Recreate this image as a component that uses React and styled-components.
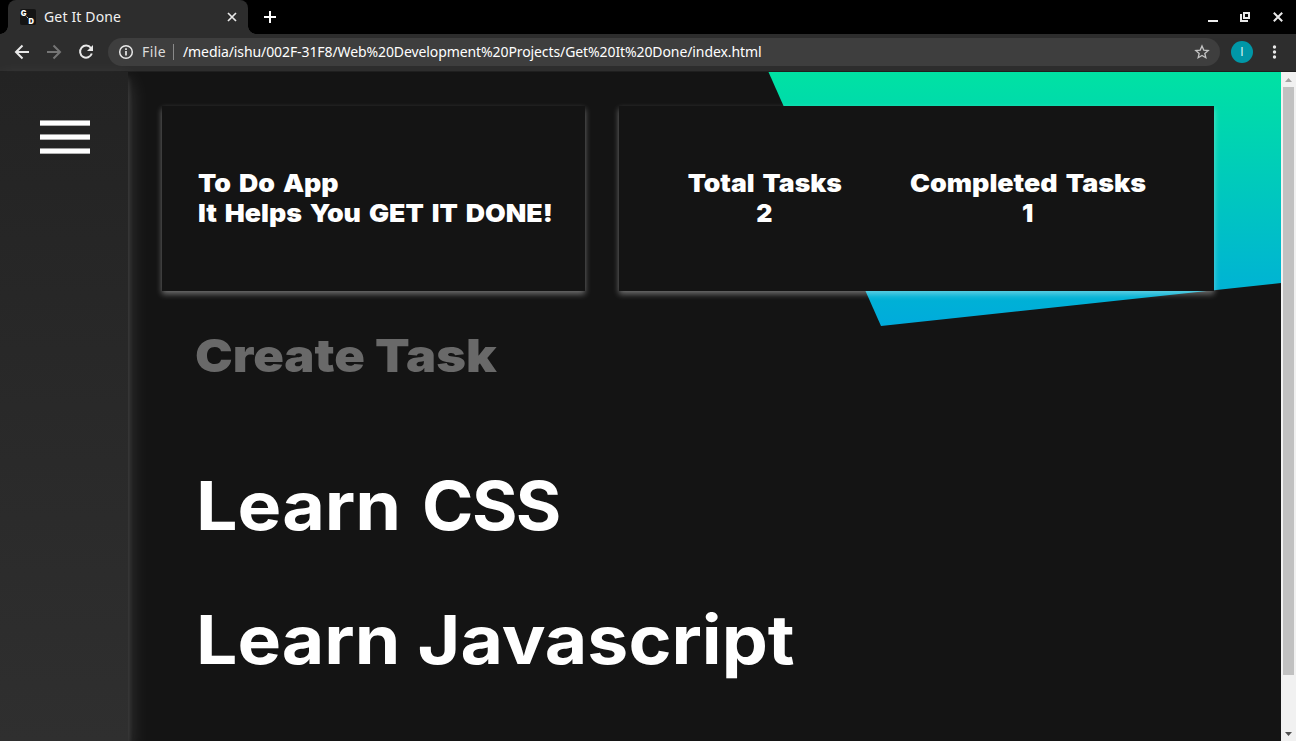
import React from "react";
import styled, { createGlobalStyle } from "styled-components";

const GlobalStyle = createGlobalStyle`
  * { box-sizing: border-box; }
  body {
    margin: 0;
    background: #141414;
    overflow: hidden;
    font-family: Inter, "Liberation Sans", sans-serif;
  }
`;

const Window = styled.div`
  display: flex;
  flex-direction: column;
  width: 1296px;
  height: 741px;
  overflow: hidden;
`;

const TabStrip = styled.header`
  display: flex;
  height: 34px;
  padding-left: 8px;
  background: #000;
  font-family: "Noto Sans", sans-serif;
`;

const Tab = styled.div`
  position: relative;
  display: flex;
  align-items: center;
  width: 240px;
  height: 34px;
  padding: 0 10px 0 12px;
  background: #2d2d2d;
  border-radius: 8px 8px 0 0;
  color: #f1f1f1;
  &::before,
  &::after {
    content: "";
    position: absolute;
    bottom: 0;
    width: 8px;
    height: 8px;
  }
  &::before {
    left: -8px;
    background: radial-gradient(circle at 0 0, transparent 7.5px, #2d2d2d 8px);
  }
  &::after {
    right: -8px;
    background: radial-gradient(circle at 100% 0, transparent 7.5px, #2d2d2d 8px);
  }
`;

const TabTitle = styled.span`
  flex: 1;
  margin-left: 8px;
  font-size: 14px;
  line-height: 20px;
  letter-spacing: 0.15px;
  white-space: nowrap;
`;

const NewTab = styled.div`
  display: flex;
  align-items: center;
  margin-left: 15px;
`;

const WindowControls = styled.div`
  display: flex;
  align-items: center;
  gap: 21px;
  margin-left: auto;
  padding-right: 12px;
`;

const Toolbar = styled.div`
  display: flex;
  align-items: center;
  flex: none;
  height: 38px;
  padding: 0 13px 1px 14px;
  background: #2d2d2d;
  border-bottom: 1px solid #1f1f1f;
`;

const NavButtons = styled.div`
  display: flex;
  gap: 16px;
  width: 94px;
`;

const AddressBar = styled.div`
  display: flex;
  align-items: center;
  width: 1112px;
  height: 28px;
  padding: 0 10px;
  border-radius: 14px;
  background: #3e3e3e;
  color: #fff;
  font: 14px/20px "Noto Sans", sans-serif;
  white-space: nowrap;
`;

const Scheme = styled.span`
  width: 31px;
  margin-left: 8px;
  color: #dcdcdc;
  letter-spacing: 0.4px;
`;

const Path = styled.span`
  flex: 1;
  padding-left: 9px;
  border-left: 1px solid #8a8a8a;
  height: 16px;
  line-height: 15px;
  letter-spacing: -0.095px;
`;

const Avatar = styled.div`
  display: flex;
  align-items: center;
  justify-content: center;
  width: 22px;
  height: 22px;
  margin: 0 18px 0 11px;
  border-radius: 50%;
  background: #0097a7;
  color: #d5f1f4;
  font: 12px Roboto, sans-serif;
`;

const Viewport = styled.div`
  display: flex;
  flex: 1;
  min-height: 0;
`;

const Sidebar = styled.nav`
  position: relative;
  z-index: 1;
  width: 128px;
  padding: 48px 40px;
  background: linear-gradient(#232323, #2f2f2f);
  box-shadow: 0 10px 20px rgba(255, 255, 255, 0.19), 0 6px 6px rgba(255, 255, 255, 0.15);
`;

const Main = styled.main`
  position: relative;
  flex: 1;
  padding: 34px 67px 0 34px;
  background: #141414;
  color: #fff;
  overflow: hidden;
`;

const Accent = styled.div`
  position: absolute;
  top: 0;
  right: 0;
  width: 513px;
  height: 254px;
  background: linear-gradient(#00e2a3, #00abdc);
  clip-path: polygon(0.5px 0, 100% 0, 100% 211px, 113px 254px);
`;

const CardRow = styled.div`
  position: relative;
  display: flex;
  gap: 34px;
`;

const Card = styled.section`
  display: flex;
  justify-content: ${(p) => (p.$spread ? "space-evenly" : "flex-start")};
  width: ${(p) => p.$width}px;
  height: 185px;
  padding: 62px ${(p) => (p.$spread ? 0 : 36)}px;
  background: #141414;
  box-shadow: 0 3px 6px rgba(255, 255, 255, 0.4);
  font-size: 25px;
  font-weight: 900;
  line-height: 30px;
  word-spacing: 2.5px;
`;

const Lines = styled.div`
  width: ${(p) => p.$width}px;
  text-align: ${(p) => p.$align || "left"};
`;

const Wide = styled.span`
  display: block;
  white-space: nowrap;
  transform: scaleX(${(p) => p.$scale || 1});
  transform-origin: ${(p) => (p.$center ? "50% 50%" : "0 50%")};
  letter-spacing: ${(p) => p.$tracking || 0}px;
`;

const CenterLine = styled.div`
  display: flex;
  justify-content: center;
`;

const NewTask = styled.div`
  margin: 34px 0 0 33px;
  color: #696969;
  font-size: 46px;
  font-weight: 900;
  line-height: 60px;
`;

const TaskList = styled.ul`
  list-style: none;
  margin: 56px 0 0 34px;
  padding: 0;
`;

const Task = styled.li`
  display: flex;
  gap: ${(p) => p.$gap || 0}px;
  height: 134px;
  font-size: 67.5px;
  font-weight: 700;
  line-height: 130px;
`;

const Scrollbar = styled.aside`
  display: flex;
  flex-direction: column;
  align-items: center;
  justify-content: space-between;
  width: 15px;
  background: #f1f1f1;
`;

const Thumb = styled.div`
  width: 11px;
  height: 588px;
  margin-bottom: auto;
  background: #c1c1c1;
`;

const Arrow = styled.div`
  display: flex;
  align-items: center;
  justify-content: center;
  height: 15px;
`;

const iconStroke = { fill: "none", stroke: "#e8e8e8", strokeWidth: 2 };

export default function App() {
  return (
    <>
      <GlobalStyle />
      <Window>
        <TabStrip>
          <Tab>
            <svg width="16" height="16" viewBox="0 0 16 16">
              <rect width="16" height="16" rx="2" fill="#141414" />
              <text x="0.8" y="6.8" fontFamily="Inter, sans-serif" fontSize="7.5" fontWeight="900" fill="#fff">G</text>
              <text x="8.5" y="14.8" fontFamily="Inter, sans-serif" fontSize="7.5" fontWeight="900" fill="#fff">D</text>
              <path d="M6.500 7.500l1.500 1.500" stroke="#aaa" />
            </svg>
            <TabTitle>Get It Done</TabTitle>
            <svg width="12" height="12" viewBox="0 0 12 12" {...iconStroke} strokeWidth="1.7">
              <path d="M2 2l8 8M10 2L2 10" />
            </svg>
          </Tab>
          <NewTab>
            <svg width="14" height="14" viewBox="0 0 14 14" {...iconStroke} stroke="#fff">
              <path d="M7 1v12M1 7h12" />
            </svg>
          </NewTab>
          <WindowControls>
            <svg width="12" height="12" viewBox="0 0 12 12" fill="#eee"><rect x="2" y="9" width="10" height="2" /></svg>
            <svg width="12" height="12" viewBox="0 0 12 12" {...iconStroke}>
              <path d="M5 2h5v5H5zM2 3v7h7" />
            </svg>
            <svg width="12" height="12" viewBox="0 0 12 12" {...iconStroke}>
              <path d="M1.8 1.8l8.4 8.4M10.2 1.8l-8.4 8.4" />
            </svg>
          </WindowControls>
        </TabStrip>

        <Toolbar>
          <NavButtons>
            <svg width="16" height="16" viewBox="0 0 16 16" {...iconStroke}><path d="M15 8H2.5M8.5 1.5L2 8l6.500 6.500" /></svg>
            <svg width="16" height="16" viewBox="0 0 16 16" {...iconStroke} stroke="#757575"><path d="M1 8h12.500M7.500 1.500L14 8l-6.500 6.500" /></svg>
            <svg width="16" height="16" viewBox="0 0 16 16" {...iconStroke}>
              <path d="M12.900 4A6 6 0 1 0 13.800 9.500" />
              <path d="M15 1v6H9z" fill="#e8e8e8" stroke="none" />
            </svg>
          </NavButtons>
          <AddressBar>
            <svg width="16" height="16" viewBox="0 0 16 16" {...iconStroke} strokeWidth="1.5">
              <circle cx="8" cy="8" r="6.300" />
              <path d="M8 7v4.500M8 4.300v1.600" strokeWidth="1.700" />
            </svg>
            <Scheme>File</Scheme>
            <Path>/media/ishu/002F-31F8/Web%20Development%20Projects/Get%20It%20Done/index.html</Path>
            <svg width="16" height="16" viewBox="0 0 16 16" fill="none" stroke="#c4c4c4" strokeWidth="1.300">
              <path d="M8 2l1.750 4.100 4.450.4-3.370 2.930 1 4.350L8 11.480l-3.830 2.300 1-4.350L1.800 6.500l4.450-.4z" />
            </svg>
          </AddressBar>
          <Avatar>I</Avatar>
          <svg width="6" height="16" viewBox="0 0 6 16" fill="#e8e8e8">
            <circle cx="3.500" cy="3" r="1.700" /><circle cx="3.500" cy="8" r="1.700" /><circle cx="3.500" cy="13" r="1.700" />
          </svg>
        </Toolbar>

        <Viewport>
          <Sidebar>
            <svg width="50" height="34" viewBox="0 0 50 34" fill="#fff">
              <rect y="0.450" width="50" height="5.200" />
              <rect y="14.450" width="50" height="5.200" />
              <rect y="28.450" width="50" height="5.200" />
            </svg>
          </Sidebar>
          <Main>
            <Accent />
            <CardRow>
              <Card $width={423}>
                <Lines>
                  <Wide $scale={1.068}>To Do App</Wide>
                  <Wide $scale={1.068}>It Helps You GET IT DONE!</Wide>
                </Lines>
              </Card>
              <Card $width={595} $spread>
                <Lines $width={154} $align="center">
                  <CenterLine><Wide $center $scale={1.06}>Total Tasks</Wide></CenterLine>
                  <Wide $center>2</Wide>
                </Lines>
                <Lines $width={236} $align="center">
                  <CenterLine><Wide $center $scale={1.073}>Completed Tasks</Wide></CenterLine>
                  <Wide $center>1</Wide>
                </Lines>
              </Card>
            </CardRow>
            <NewTask><Wide $scale={1.1}>Create Task</Wide></NewTask>
            <TaskList>
              <Task $gap={38}>
                <Wide $scale={1.09}>Learn</Wide>
                <Wide $scale={1.03} $tracking={-1.5}>CSS</Wide>
              </Task>
              <Task><Wide $scale={1.085}>Learn Javascript</Wide></Task>
            </TaskList>
          </Main>
          <Scrollbar>
            <Arrow><svg width="7" height="4" viewBox="0 0 7 4"><path d="M0 4L3.500 0 7 4z" fill="#a3a3a3" /></svg></Arrow>
            <Thumb />
            <Arrow><svg width="7" height="4" viewBox="0 0 7 4"><path d="M0 0h7L3.500 4z" fill="#505050" /></svg></Arrow>
          </Scrollbar>
        </Viewport>
      </Window>
    </>
  );
}
